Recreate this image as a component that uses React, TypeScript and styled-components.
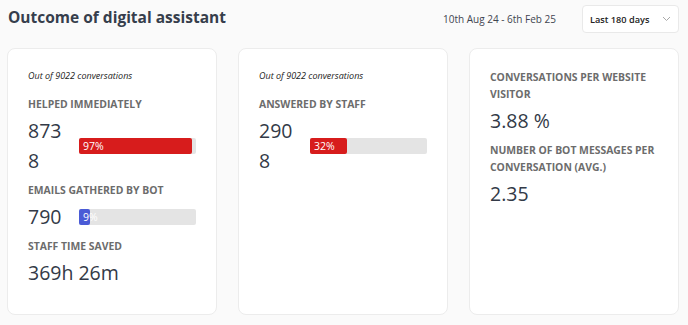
import styled, { createGlobalStyle } from "styled-components";

const GlobalStyle = createGlobalStyle`
    body {
        margin: 0;
        background: #fafafa;
        font-family: "Open Sans", "Liberation Sans", sans-serif;
    }
`

const Page = styled.div`
    width: 688px;
    height: 325px;
    box-sizing: border-box;
    padding: 5px 9px 0 7px;
`

const Header = styled.div`
    display: flex;
    align-items: center;
    height: 28px;
`

const Title = styled.h1`
    margin: 0 0 4px 1px;
    font-size: 15.5px;
    font-weight: 700;
    color: #363e4c;
`

const DateRange = styled.span`
    margin-left: auto;
    margin-right: 26px;
    font-size: 10px;
    color: #3f4550;
`

const Select = styled.div`
    display: flex;
    align-items: center;
    width: 97px;
    height: 28px;
    box-sizing: border-box;
    padding: 0 7px 0 7px;
    background: #fff;
    border: 1px solid #e9e9e9;
    border-radius: 4px;
    font-size: 9.2px;
    font-weight: 600;
    color: #222;
`

const Chevron = styled.svg`
    margin-left: auto;
`

const Cards = styled.div`
    display: grid;
    grid-template-columns: repeat(3, 210px);
    column-gap: 21px;
    margin-top: 15px;
`

const Card = styled.div`
    height: 267px;
    box-sizing: border-box;
    padding: 20px 20px;
    background: #fff;
    border: 1px solid #ececec;
    border-radius: 8px;
`

const Caption = styled.div`
    font-size: 9px;
    font-style: italic;
    line-height: 14px;
    color: #222;
    margin-bottom: 13px;
`

const Label = styled.div`
    font-size: 10.4px;
    font-weight: 700;
    line-height: 17px;
    text-transform: uppercase;
    color: #6c6c6c;
    margin-bottom: 3px;
`

const Row = styled.div`
    display: flex;
    align-items: center;
    margin-bottom: 6px;
`

const Value = styled.div<{ $narrow?: boolean }>`
    font-size: 19.5px;
    line-height: 30px;
    color: #333a47;
    ${p => p.$narrow ? "width: 40px; margin-right: 11px; word-break: break-all;" : "margin-bottom: 6px;"}
`

const Bar = styled.div`
    flex: 1;
    height: 16px;
    background: #e4e4e4;
    border-radius: 2px;
`

const Fill = styled.div<{ $color: string }>`
    height: 100%;
    background: ${p => p.$color};
    border-radius: 2px;
    box-sizing: border-box;
    padding-left: 4px;
    font-size: 10.5px;
    line-height: 16px;
    color: #fff;
    white-space: nowrap;
`

const Metric = ({ label, value, pct, color }: { label: string, value: string, pct: number, color: string }) => (
    <>
        <Label>{label}</Label>
        <Row>
            <Value $narrow>{value}</Value>
            <Bar>
                <Fill $color={color} style={{ width: `${pct}%` }}>{pct}%</Fill>
            </Bar>
        </Row>
    </>
)

const RED = "#d71c1c"
const BLUE = "#4a5bd6"

export default function App() {
    return (
        <Page>
            <GlobalStyle />
            <Header>
                <Title>Outcome of digital assistant</Title>
                <DateRange>10th Aug 24 - 6th Feb 25</DateRange>
                <Select>
                    Last 180 days
                    <Chevron width="9" height="6" viewBox="0 0 9 6">
                        <path d="M1 1l3.5 3.5L8 1" fill="none" stroke="#a9a9a9" strokeWidth="1" />
                    </Chevron>
                </Select>
            </Header>
            <Cards>
                <Card>
                    <Caption>Out of 9022 conversations</Caption>
                    <Metric label="Helped immediately" value="8738" pct={97} color={RED} />
                    <Metric label="Emails gathered by bot" value="790" pct={9} color={BLUE} />
                    <Label>Staff time saved</Label>
                    <Value>369h 26m</Value>
                </Card>
                <Card>
                    <Caption>Out of 9022 conversations</Caption>
                    <Metric label="Answered by staff" value="2908" pct={32} color={RED} />
                </Card>
                <Card>
                    <Label>Conversations per website visitor</Label>
                    <Value>3.88 %</Value>
                    <Label>Number of bot messages per conversation (avg.)</Label>
                    <Value>2.35</Value>
                </Card>
            </Cards>
        </Page>
    )
}
